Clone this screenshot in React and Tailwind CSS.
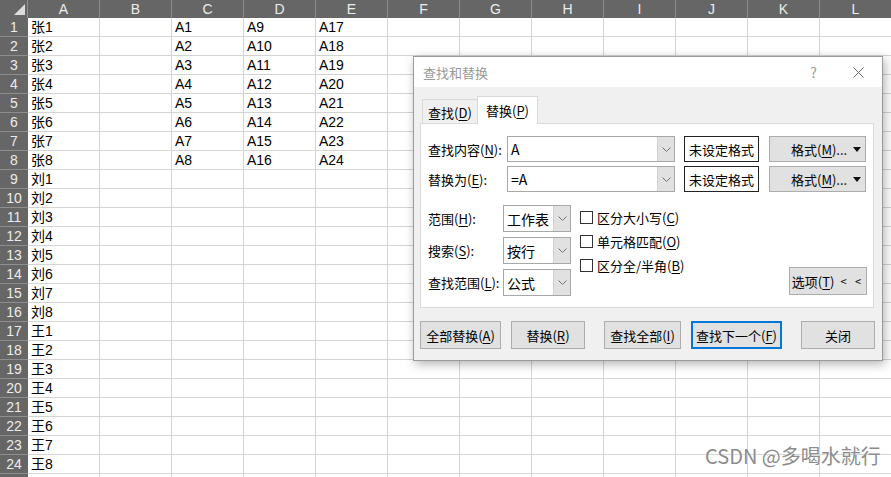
import React from "react";

const COLS = ["A","B","C","D","E","F","G","H","I","J","K","L"];
const colA = ["张1","张2","张3","张4","张5","张6","张7","张8","刘1","刘2","刘3","刘4","刘5","刘6","刘7","刘8","王1","王2","王3","王4","王5","王6","王7","王8",""];

function cellText(r, c) {
  if (c === 0) return colA[r];
  if (r < 8) {
    if (c === 2) return "A" + (r + 1);
    if (c === 3) return "A" + (r + 9);
    if (c === 4) return "A" + (r + 17);
  }
  return "";
}

const M = ({ children }) => <span className="underline underline-offset-[2px]">{children}</span>;

const Chevron = () => (
  <svg width="9" height="5" viewBox="0 0 9 5"><path d="M0.5 0.5 L4.5 4.5 L8.5 0.5" fill="none" stroke="#707070" strokeWidth="1" /></svg>
);

function Combo({ value, w, h, dd }) {
  return (
    <div className={`flex border border-[#a8a8a8] bg-white ${w} ${h}`}>
      <div className="flex-1 flex items-center pl-[3px] text-[14px] text-black">{value}</div>
      <div className={`flex items-center justify-center bg-[#e1e1e1] border-l border-[#d0d0d0] ${dd}`}><Chevron /></div>
    </div>
  );
}

function Btn({ children, w, blue }) {
  return (
    <div className={`flex items-center justify-center h-[28px] bg-[#e1e1e1] text-black ${w} ${blue ? "border-2 border-[#0078d7]" : "border border-[#adadad]"}`}>{children}</div>
  );
}

function Check({ children }) {
  return (
    <div className="flex items-center h-[24px]">
      <div className="w-[13px] h-[13px] border border-[#333] bg-white" />
      <div className="ml-[4px] text-black">{children}</div>
    </div>
  );
}

function Dialog() {
  return (
    <div className="absolute left-[413px] top-[56px] w-[470px] h-[305px] border border-[#9a9a9a] bg-[#f0f0f0] shadow-[2px_3px_10px_rgba(0,0,0,0.3)] text-[13px] leading-none" style={{ fontFamily: '"Noto Sans CJK SC", sans-serif' }}>
      <div className="h-[30px] bg-white flex items-center pl-[9px] pr-[18px] text-[#999999]">
        <span className="text-[13px]">查找和替换</span>
        <span className="ml-auto text-[14px] text-[#999] mr-[36px]">?</span>
        <svg width="11" height="11" viewBox="0 0 11 11"><path d="M0.5 0.5 L10.5 10.5 M10.5 0.5 L0.5 10.5" stroke="#666" strokeWidth="1" /></svg>
      </div>
      <div className="px-[6px] pt-[9px]">
        <div className="flex items-end h-[28px] pl-[2px] relative z-10">
          <div className="w-[55px] h-[25px] border-t border-l border-[#d9d9d9] flex items-center justify-center text-black">查找(<M>D</M>)</div>
          <div className="w-[61px] h-[28px] border-t border-l border-r border-[#d9d9d9] bg-white flex items-center justify-center text-black">替换(<M>P</M>)</div>
        </div>
        <div className="-mt-px w-[454px] h-[185px] border border-[#d9d9d9] bg-white pl-[7px] pr-[6px] pt-[12px]">
          <div className="flex items-center h-[26px]">
            <div className="w-[79px] text-black">查找内容(<M>N</M>):</div>
            <Combo value="A" w="w-[168px]" h="h-[26px]" dd="w-[17px]" />
            <div className="ml-[9px] w-[75px] h-[26px] border border-[#222] flex items-center justify-center text-black">未设定格式</div>
            <div className="ml-[10px] w-[97px] h-[26px] border border-[#adadad] bg-[#e1e1e1] flex items-center text-black">
              <span className="ml-[21px]">格式(<M>M</M>)...</span>
              <svg className="ml-auto mr-[4px]" width="8" height="5" viewBox="0 0 8 5"><path d="M0 0 H8 L4 5 Z" fill="#111" /></svg>
            </div>
          </div>
          <div className="flex items-center h-[26px] mt-[4px]">
            <div className="w-[79px] text-black">替换为(<M>E</M>):</div>
            <Combo value="=A" w="w-[168px]" h="h-[26px]" dd="w-[17px]" />
            <div className="ml-[9px] w-[75px] h-[26px] border border-[#222] flex items-center justify-center text-black">未设定格式</div>
            <div className="ml-[10px] w-[97px] h-[26px] border border-[#adadad] bg-[#e1e1e1] flex items-center text-black">
              <span className="ml-[21px]">格式(<M>M</M>)...</span>
              <svg className="ml-auto mr-[4px]" width="8" height="5" viewBox="0 0 8 5"><path d="M0 0 H8 L4 5 Z" fill="#111" /></svg>
            </div>
          </div>
          <div className="flex mt-[13px]">
            <div className="flex flex-col gap-[5px]">
              <div className="flex items-center">
                <div className="w-[75px] text-black">范围(<M>H</M>):</div>
                <Combo value="工作表" w="w-[68px]" h="h-[27px]" dd="w-[17px]" />
              </div>
              <div className="flex items-center">
                <div className="w-[75px] text-black">搜索(<M>S</M>):</div>
                <Combo value="按行" w="w-[68px]" h="h-[27px]" dd="w-[17px]" />
              </div>
              <div className="flex items-center">
                <div className="w-[75px] text-black">查找范围(<M>L</M>):</div>
                <Combo value="公式" w="w-[68px]" h="h-[27px]" dd="w-[17px]" />
              </div>
            </div>
            <div className="ml-[9px] flex flex-col">
              <Check>区分大小写(<M>C</M>)</Check>
              <Check>单元格匹配(<M>O</M>)</Check>
              <Check>区分全/半角(<M>B</M>)</Check>
            </div>
            <div className="ml-auto self-end mb-[1px] w-[78px] h-[28px] border border-[#adadad] bg-[#e1e1e1] flex items-center justify-center text-black">
              选项(<M>T</M>)<span className="ml-[6px] text-[11px] tracking-[3px]">&lt; &lt;</span>
            </div>
          </div>
        </div>
        <div className="flex mt-[13px]">
          <Btn w="w-[81px]">全部替换(<M>A</M>)</Btn>
          <div className="ml-[10px]"><Btn w="w-[74px]">替换(<M>R</M>)</Btn></div>
          <div className="ml-[19px]"><Btn w="w-[77px]">查找全部(<M>I</M>)</Btn></div>
          <div className="ml-[10px]"><Btn w="w-[91px]" blue>查找下一个(<M>F</M>)</Btn></div>
          <div className="ml-[19px]"><Btn w="w-[74px]">关闭</Btn></div>
        </div>
      </div>
    </div>
  );
}

export default function App() {
  const rows = Array.from({ length: 25 }, (_, i) => i);
  return (
    <div className="relative w-[891px] h-[477px] overflow-hidden bg-white" style={{ fontFamily: '"Liberation Sans", "Noto Sans CJK SC", sans-serif' }}>
      <div className="flex h-[18px] bg-[#666666]">
        <div className="w-[28px] shrink-0 h-full border-r border-[#8e8e8e] relative">
          <svg className="absolute left-[14px] top-[4px]" width="11" height="11" viewBox="0 0 11 11"><path d="M11 0 V11 H0 Z" fill="#dcdcdc" /></svg>
        </div>
        {COLS.map((c) => (
          <div key={c} className="w-[72px] shrink-0 h-full border-r border-[#8e8e8e] flex items-center justify-center text-[14px] text-[#ececec] leading-none">{c}</div>
        ))}
      </div>
      {rows.map((r) => (
        <div key={r} className="flex h-[19px]">
          <div className="w-[28px] shrink-0 h-full bg-[#666666] border-b border-[#8e8e8e] flex items-center justify-center text-[14px] text-[#ececec] leading-none">{r < 24 ? r + 1 : ""}</div>
          {COLS.map((c, ci) => (
            <div key={c} className="w-[72px] shrink-0 h-full border-r border-b border-[#d4d4d4] flex items-center pl-[3px] text-[14px] text-black leading-none whitespace-nowrap">{cellText(r, ci)}</div>
          ))}
        </div>
      ))}
      <Dialog />
      <div className="absolute left-[705px] top-[446px] text-[20px] text-[#8c8c8c] leading-none [text-shadow:0_0_2px_#fff]" style={{ fontFamily: '"Noto Sans CJK SC", sans-serif' }}>CSDN @多喝水就行</div>
    </div>
  );
}
